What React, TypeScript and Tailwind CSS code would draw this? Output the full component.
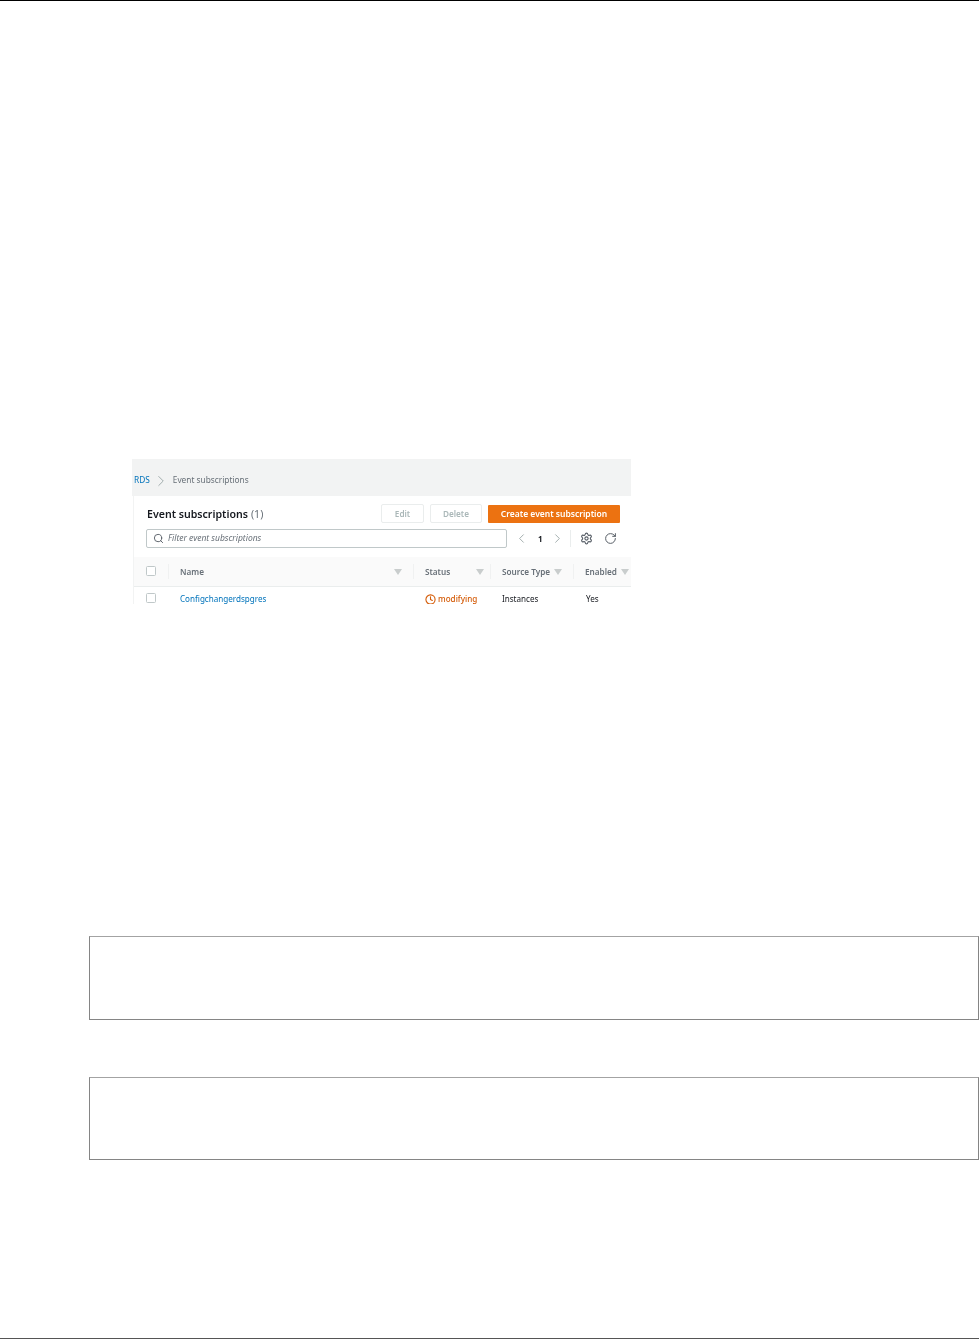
import React from "react";
import { ChevronLeft, ChevronRight, Clock, RotateCw, Search, Settings } from "lucide-react";

const font = { fontFamily: '"Noto Sans", "Open Sans", sans-serif' };

const Caret = () => (
  <svg width="8" height="6" viewBox="0 0 8 6" className="shrink-0">
    <path d="M0 0h8L4 6z" fill="#c9cdcd" />
  </svg>
);

const Check = () => (
  <div className="h-[10px] w-[10px] rounded-[1.5px] border border-[#c0c8c9] bg-white" />
);

const HeadCell = ({ label, width, caretGap }: { label: string; width: string; caretGap: string }) => (
  <div className={`flex h-full items-center ${width}`}>
    <div className="h-[15px] w-px bg-[#f0f1f1]" />
    <span className="ml-[11px] pt-px text-[8.2px] font-semibold text-[#687078]">{label}</span>
    <span className={caretGap}>
      <Caret />
    </span>
  </div>
);

function ConsoleShot() {
  return (
    <div
      className="ml-[132px] mt-[458px] h-[145px] w-[499px] overflow-hidden bg-white blur-[0.4px]"
      style={font}
    >
      {/* breadcrumb */}
      <div className="flex h-[37px] items-center bg-[#f2f3f3] pl-[2px] pt-[6px] text-[8.3px] text-[#687078]">
        <span className="text-[#0073bb]">RDS</span>
        <ChevronRight size={18} strokeWidth={1} className="ml-[2px] mr-[3px] text-[#879596]" />
        <span>Event subscriptions</span>
      </div>

      <div className="ml-px border-l border-[#f2f3f3]">
        {/* title + actions */}
        <div className="flex h-[27px] items-end pl-[12px]">
          <div className="flex h-[19px] w-[235px] items-center pl-px pt-px text-[10.6px] font-semibold leading-none text-[#16191f]">
            Event subscriptions
            <span className="ml-[3px] font-normal text-[#687078]">(1)</span>
          </div>
          <button className="h-[19px] w-[43px] rounded-[2px] border border-[#eaeded] pt-px text-[8.2px] font-semibold text-[#aab7b8]">
            Edit
          </button>
          <button className="ml-[6px] h-[19px] w-[52px] rounded-[2px] border border-[#eaeded] pt-px text-[8.2px] font-semibold text-[#aab7b8]">
            Delete
          </button>
          <button className="ml-[6px] h-[18px] w-[132px] rounded-[1px] bg-[#ec7211] text-[8.5px] font-semibold text-white">
            Create event subscription
          </button>
        </div>

        {/* filter + pager */}
        <div className="mt-[6px] flex h-[19px] items-center pl-[12px]">
          <div className="flex h-[19px] w-[361px] items-center rounded-[2px] border border-[#c0c8c9] pl-[6px]">
            <Search size={11} strokeWidth={2} className="text-[#545b64]" />
            <span className="ml-[4px] text-[8.5px] italic text-[#687078]">Filter event subscriptions</span>
          </div>
          <ChevronLeft size={15} strokeWidth={1.2} className="ml-[7px] text-[#879596]" />
          <span className="ml-[9px] text-[8px] font-bold text-[#16191f]">1</span>
          <ChevronRight size={15} strokeWidth={1.2} className="ml-[7px] text-[#879596]" />
          <div className="ml-[5px] h-[17px] w-px bg-[#eaeded]" />
          <Settings size={13} strokeWidth={2} className="ml-[9px] text-[#545b64]" />
          <RotateCw size={13} strokeWidth={1.8} className="ml-[11px] text-[#545b64]" />
        </div>

        {/* table head */}
        <div className="mt-[9px] flex h-[30px] items-center border-b border-[#eaeded] bg-[#fafafa]">
          <div className="-mt-[2px] w-[34px] pl-[12px]">
            <Check />
          </div>
          <HeadCell label="Name" width="w-[245px]" caretGap="ml-[190px]" />
          <HeadCell label="Status" width="w-[77px]" caretGap="ml-[26px]" />
          <HeadCell label="Source Type" width="w-[83px]" caretGap="ml-[4px]" />
          <HeadCell label="Enabled" width="w-[58px]" caretGap="ml-[4px]" />
        </div>

        {/* row */}
        <div className="flex h-[25px] items-center text-[8.1px] text-[#16191f]">
          <div className="-mt-[3px] w-[34px] pl-[12px]">
            <Check />
          </div>
          <div className="w-[245px] pl-[12px] text-[#0073bb]">Configchangerdspgres</div>
          <div className="flex w-[77px] items-center pl-[12px] font-medium text-[#d45b07]">
            <Clock size={11} strokeWidth={2.4} className="mr-[2px]" />
            modifying
          </div>
          <div className="w-[83px] pl-[12px]">Instances</div>
          <div className="pl-[13px]">Yes</div>
        </div>
      </div>
    </div>
  );
}

const CodeBox = ({ className, height }: { className: string; height: string }) => (
  <div
    className={`ml-[89px] w-[890px] border border-[#858585] border-t-[#a3a3a3] ${height} ${className}`}
  />
);

export default function App() {
  return (
    <div className="flex h-[1339px] w-[979px] flex-col overflow-hidden bg-white">
      <div className="h-px shrink-0 bg-black" />
      <ConsoleShot />
      <CodeBox className="mt-[332px]" height="h-[84px]" />
      <CodeBox className="mt-[57px]" height="h-[83px]" />
      <div className="mt-auto h-px shrink-0 bg-[#555555]" />
    </div>
  );
}
